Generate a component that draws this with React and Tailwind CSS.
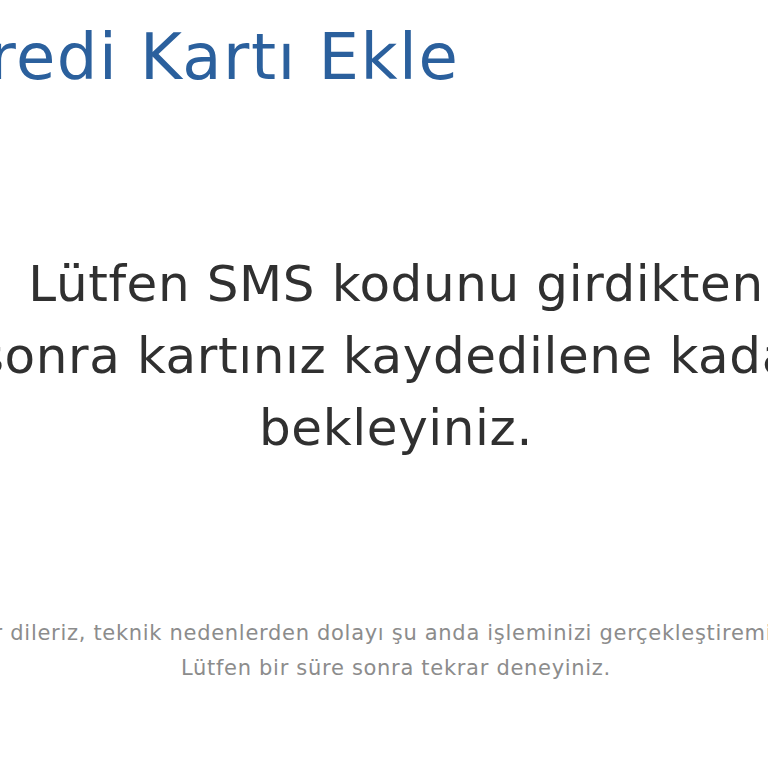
import React from 'react';

const App = () => {
    return (
        <div className="w-[768px] h-[768px] overflow-hidden bg-white" style={{ fontFamily: '"DejaVu Sans", sans-serif' }}>
            <div className="w-[900px] ml-[-54px] flex flex-col">
                <h1 className="ml-[0px] mt-[17px] text-[64px] leading-[80px] text-[#2b609d] font-normal tracking-[1.5px]">
                    Kredi Kartı Ekle
                </h1>

                <p className="mt-[151px] text-center text-[#303030] text-[50px] leading-[72px] tracking-[0.6px]">
                    Lütfen SMS kodunu girdikten<br />
                    sonra kartınız kaydedilene kadar<br />
                    bekleyiniz.
                </p>

                <div className="mt-[152px] text-center text-[#8c8c8c] text-[21px] leading-[35px] tracking-[0.7px]">
                    Özür dileriz, teknik nedenlerden dolayı şu anda işleminizi gerçekleştiremiyoruz.<br />
                    Lütfen bir süre sonra tekrar deneyiniz.
                </div>
            </div>
        </div>
    );
};

export default App;
